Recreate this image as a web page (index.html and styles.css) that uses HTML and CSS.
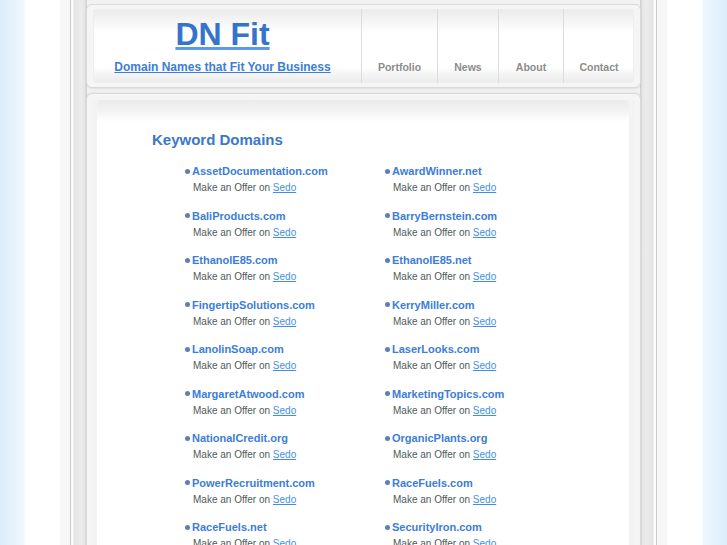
FILE: index.html
```html
<!DOCTYPE html>
<html>
<head>
<meta charset="utf-8">
<title>DN Fit</title>
<link rel="stylesheet" href="styles.css">
</head>
<body>
<div class="page">
  <div class="rail">
    <div class="hbox">
      <div class="hinner">
        <div class="logo">
          <a class="brand" href="#">DN Fit</a>
          <a class="tagline" href="#">Domain Names that Fit Your Business</a>
        </div>
        <a class="nav n1" href="#">Portfolio</a>
        <a class="nav n2" href="#">News</a>
        <a class="nav n3" href="#">About</a>
        <a class="nav n4" href="#">Contact</a>
      </div>
    </div>
    <div class="cbox">
      <div class="cinner">
        <h2 class="title">Keyword Domains</h2>
        <div class="domains">
          <div class="item"><div class="name">AssetDocumentation.com</div><div class="offer">Make an Offer on <a href="#">Sedo</a></div></div>
          <div class="item"><div class="name">AwardWinner.net</div><div class="offer">Make an Offer on <a href="#">Sedo</a></div></div>
          <div class="item"><div class="name">BaliProducts.com</div><div class="offer">Make an Offer on <a href="#">Sedo</a></div></div>
          <div class="item"><div class="name">BarryBernstein.com</div><div class="offer">Make an Offer on <a href="#">Sedo</a></div></div>
          <div class="item"><div class="name">EthanolE85.com</div><div class="offer">Make an Offer on <a href="#">Sedo</a></div></div>
          <div class="item"><div class="name">EthanolE85.net</div><div class="offer">Make an Offer on <a href="#">Sedo</a></div></div>
          <div class="item"><div class="name">FingertipSolutions.com</div><div class="offer">Make an Offer on <a href="#">Sedo</a></div></div>
          <div class="item"><div class="name">KerryMiller.com</div><div class="offer">Make an Offer on <a href="#">Sedo</a></div></div>
          <div class="item"><div class="name">LanolinSoap.com</div><div class="offer">Make an Offer on <a href="#">Sedo</a></div></div>
          <div class="item"><div class="name">LaserLooks.com</div><div class="offer">Make an Offer on <a href="#">Sedo</a></div></div>
          <div class="item"><div class="name">MargaretAtwood.com</div><div class="offer">Make an Offer on <a href="#">Sedo</a></div></div>
          <div class="item"><div class="name">MarketingTopics.com</div><div class="offer">Make an Offer on <a href="#">Sedo</a></div></div>
          <div class="item"><div class="name">NationalCredit.org</div><div class="offer">Make an Offer on <a href="#">Sedo</a></div></div>
          <div class="item"><div class="name">OrganicPlants.org</div><div class="offer">Make an Offer on <a href="#">Sedo</a></div></div>
          <div class="item"><div class="name">PowerRecruitment.com</div><div class="offer">Make an Offer on <a href="#">Sedo</a></div></div>
          <div class="item"><div class="name">RaceFuels.com</div><div class="offer">Make an Offer on <a href="#">Sedo</a></div></div>
          <div class="item"><div class="name">RaceFuels.net</div><div class="offer">Make an Offer on <a href="#">Sedo</a></div></div>
          <div class="item"><div class="name">SecurityIron.com</div><div class="offer">Make an Offer on <a href="#">Sedo</a></div></div>
        </div>
      </div>
    </div>
  </div>
</div>
</body>
</html>
```
FILE: styles.css
```css
html, body {
  margin: 0;
  padding: 0;
  height: 100%;
  overflow: hidden;
}
body {
  font-family: "Liberation Sans", Arial, sans-serif;
  background: linear-gradient(to right,
    #dcedfa 0, #eef7fd 24px, #ffffff 25px,
    #ffffff 702px, #eef7fd 703px, #dcedfa 727px);
}
.page {
  width: 607px;
  margin: 0 auto;
  min-height: 545px;
  box-sizing: border-box;
  padding: 0 10px;
  background: #f7f7f7;
}
.rail {
  min-height: 545px;
  box-sizing: border-box;
  border-left: 1px solid #cbcbcb;
  border-right: 1px solid #cbcbcb;
  padding: 4px 15px 0;
  background:
    linear-gradient(to right, #fbfbfb 0, #fbfbfb 2px, #e3e3e3 3px, #ececec 10px, #e6e6e6 14px, #d2d2d2 15px) left top / 16px 100% no-repeat,
    linear-gradient(to left, #fbfbfb 0, #fbfbfb 2px, #e3e3e3 3px, #ececec 10px, #e6e6e6 14px, #d2d2d2 15px) right top / 16px 100% no-repeat,
    #f2f2f2;
}
.hbox {
  background: #f5f5f5;
  border: 1px solid #dadada;
  border-radius: 6px;
  padding: 4px 6px;
  box-shadow: 0 1px 2px rgba(0, 0, 0, 0.08);
}
.hinner {
  display: flex;
  height: 74px;
  border-radius: 4px;
  background: linear-gradient(#eaeaea 0, #f7f7f7 14px, #ffffff 24px, #ffffff 58px, #f3f3f3 66px, #ebebeb 74px);
  box-shadow: inset 0 0 0 1px #eeeeee;
}
.logo {
  width: 268px;
  box-sizing: border-box;
  padding: 7px 9px 0 0;
  display: flex;
  flex-direction: column;
  align-items: center;
}
.brand {
  font-size: 32px;
  line-height: 36px;
  font-weight: bold;
  color: #3674cc;
  text-decoration: underline;
  text-decoration-color: #5a9ae6;
}
.tagline {
  margin-top: 8px;
  font-size: 12px;
  line-height: 14px;
  font-weight: bold;
  color: #3b7ed6;
  text-decoration: underline;
}
.nav {
  display: flex;
  align-items: flex-end;
  justify-content: center;
  padding-bottom: 9px;
  box-sizing: border-box;
  border-left: 1px solid #dcdcdc;
  font-size: 10.5px;
  line-height: 14px;
  font-weight: bold;
  color: #8c8c8c;
  text-decoration: none;
}
.n1 { width: 76px; }
.n2 { width: 61px; }
.n3 { width: 65px; }
.n4 { flex: 1; }
.cbox {
  margin-top: 5px;
  background: #f5f5f5;
  border: 1px solid #dadada;
  border-bottom: none;
  border-radius: 6px 6px 0 0;
  padding: 6px 5px 0;
  min-height: 460px;
  box-shadow: 0 -1px 2px rgba(0, 0, 0, 0.05);
}
.cinner {
  min-height: 460px;
  border-radius: 4px 4px 0 0;
  padding: 31px 0 0 60px;
  background: linear-gradient(#ebebeb 0, #f4f4f4 12px, #ffffff 22px);
  box-shadow: inset 5px 0 0 #f3f3f3, inset -6px 0 0 #f3f3f3, inset 0 0 0 1px #ececec;
}
.title {
  margin: 0;
  font-size: 15px;
  line-height: 18px;
  font-weight: bold;
  color: #3a78c9;
}
.domains {
  margin: 14px 0 0 33px;
  display: grid;
  grid-template-columns: 200px 200px;
  row-gap: 10.5px;
}
.name {
  display: flex;
  align-items: center;
  font-size: 11px;
  line-height: 16px;
  font-weight: bold;
  color: #3c7dd8;
}
.name::before {
  content: "";
  width: 5px;
  height: 5px;
  border-radius: 50%;
  background: #5b80b8;
  margin-right: 2px;
}
.offer {
  padding-left: 8px;
  font-size: 10px;
  line-height: 18px;
  color: #4f5a5a;
}
.offer a {
  color: #3f8fe6;
  text-decoration: underline;
}
```
